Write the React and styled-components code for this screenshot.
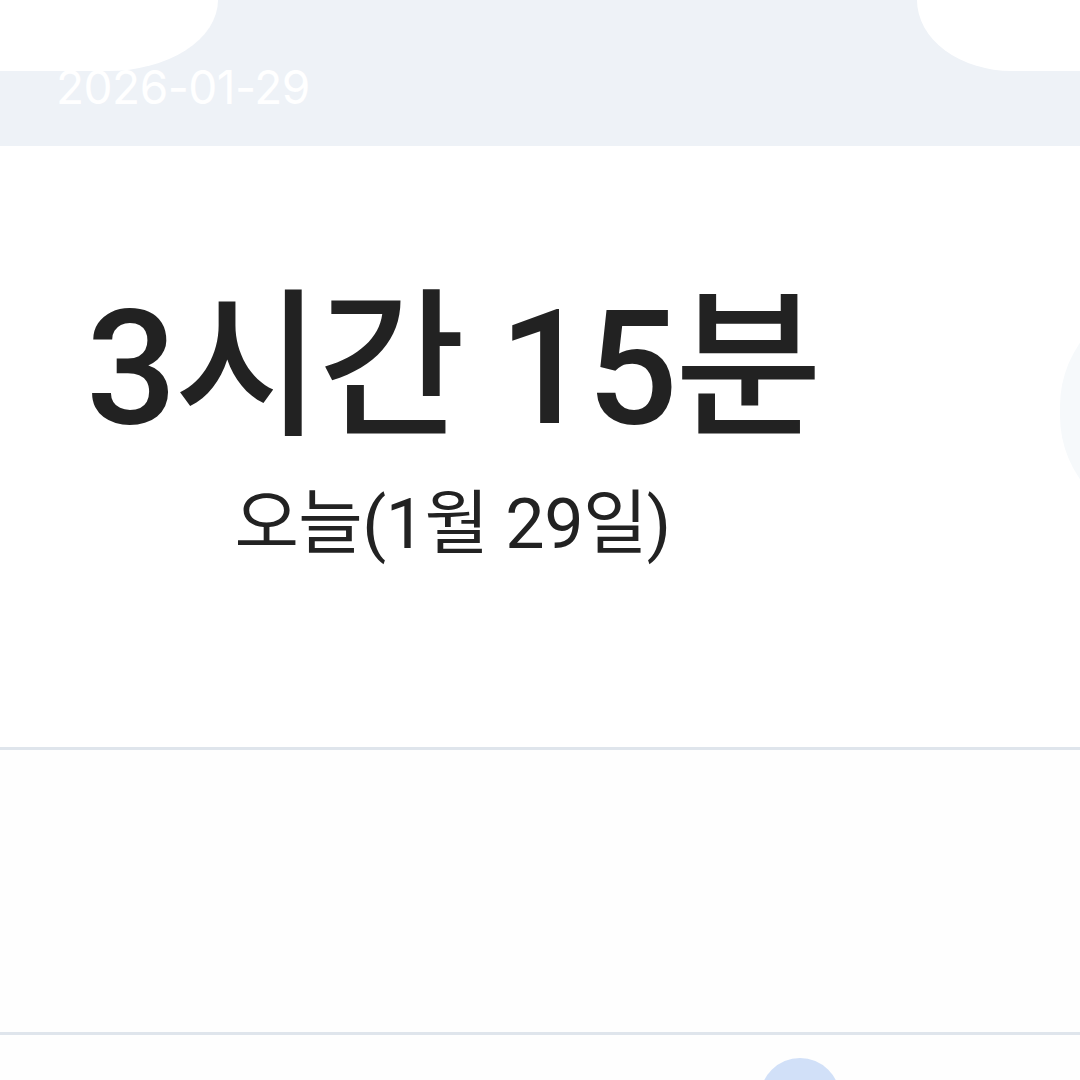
import React from "react";
import styled, { createGlobalStyle } from "styled-components";

const Global = createGlobalStyle`
  html, body { margin: 0; padding: 0; background: #ffffff; }
  body { font-family: "Noto Sans CJK KR", "Noto Sans", sans-serif; overflow: hidden; }
`;

const Screen = styled.div`
  width: 1080px;
  height: 1080px;
  overflow: hidden;
  position: relative;
  display: flex;
  flex-direction: column;
  background: #ffffff;
  & > * { flex-shrink: 0; }
`;

const Header = styled.header`
  position: relative;
  height: 146px;
  background: #eef2f7;
  display: flex;
  align-items: flex-start;
  padding: 64px 0 0 56px;
  box-sizing: border-box;
`;

const Blob = styled.div`
  position: absolute;
  top: 0;
  width: ${(p) => p.$w}px;
  height: 71px;
  background: #ffffff;
  ${(p) =>
    p.$side === "left"
      ? "left: 0; border-bottom-right-radius: 110px 71px;"
      : "right: 0; border-bottom-left-radius: 95px 71px;"}
`;

const DateText = styled.div`
  position: relative;
  font-family: "Inter", "Noto Sans", sans-serif;
  font-size: 46px;
  line-height: 1;
  color: #ffffff;
  letter-spacing: -0.5px;
`;

const Hero = styled.section`
  position: relative;
  height: 601px;
  display: flex;
  align-items: flex-start;
  padding: 143px 0 0 86px;
  box-sizing: border-box;
  background: #ffffff;
`;

const SideCard = styled.div`
  position: absolute;
  left: 1060px;
  top: 150px;
  width: 220px;
  height: 230px;
  border-radius: 110px;
  background: #f6f9fb;
`;

const Summary = styled.div`
  display: flex;
  flex-direction: column;
  align-items: center;
`;

const Duration = styled.div`
  font-family: "Roboto", "Noto Sans CJK KR", sans-serif;
  font-size: 160px;
  font-weight: 500;
  line-height: 1;
  color: #222222;
  letter-spacing: -3px;
`;

const Caption = styled.div`
  margin-top: 40px;
  font-family: "Roboto", "Noto Sans CJK KR", sans-serif;
  font-size: 70px;
  font-weight: 400;
  line-height: 1;
  color: #222222;
  letter-spacing: -0.5px;
`;

const Divider = styled.div`
  height: 3px;
  background: #dfe5ec;
`;

const Row = styled.section`
  height: ${(p) => p.$h}px;
  background: #fefefe;
  position: relative;
`;

const Dot = styled.div`
  position: absolute;
  left: 760px;
  top: 23px;
  width: 80px;
  height: 80px;
  border-radius: 50%;
  background: #d1e0f8;
`;

export default function App() {
  return (
    <Screen>
      <Global />
      <Header>
        <Blob $side="left" $w={218} />
        <Blob $side="right" $w={163} />
        <DateText>2026-01-29</DateText>
      </Header>
      <Hero>
        <SideCard />
        <Summary>
          <Duration>3시간 15분</Duration>
          <Caption>오늘(1월 29일)</Caption>
        </Summary>
      </Hero>
      <Divider />
      <Row $h={282} />
      <Divider />
      <Row $h={60}>
        <Dot />
      </Row>
    </Screen>
  );
}
